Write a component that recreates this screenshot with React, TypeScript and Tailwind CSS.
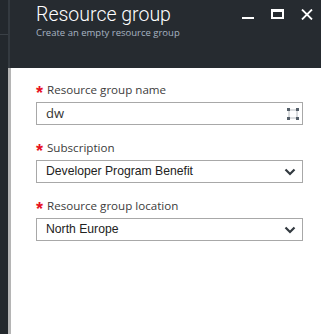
import React from 'react';

const Chevron = () => (
  <svg width="12" height="8" viewBox="0 0 12 8" className="mr-[6px]">
    <path d="M1.5 1.5 L6 6 L10.5 1.5" stroke="#333a40" strokeWidth="2.2" fill="none" />
  </svg>
);

const ExpandIcon = () => (
  <svg width="14" height="14" viewBox="0 0 14 14">
    <rect x="3" y="3" width="8" height="8" fill="none" stroke="#b8bcc0" strokeWidth="1" />
    <rect x="1" y="1" width="3" height="3" fill="#56606a" />
    <rect x="10" y="1" width="3" height="3" fill="#56606a" />
    <rect x="1" y="10" width="3" height="3" fill="#56606a" />
    <rect x="10" y="10" width="3" height="3" fill="#56606a" />
  </svg>
);

const Label = ({ text }: { text: string }) => (
  <div className="flex items-center h-[16px] mb-[4px]">
    <span className="text-[#e81123] text-[18px] leading-none w-[11px] mt-[5px] font-bold" style={{ fontFamily: '"Liberation Sans", sans-serif' }}>*</span>
    <span className="text-[11.6px] text-[#3c3c3c]" style={{ fontFamily: '"Open Sans", sans-serif' }}>{text}</span>
  </div>
);

const Select = ({ value }: { value: string }) => (
  <div className="h-[23px] border border-[#a8a8a8] flex items-center justify-between pl-[9px] bg-white">
    <span className="text-[12.2px] text-[#222]" style={{ fontFamily: '"Liberation Sans", Arial, sans-serif' }}>{value}</span>
    <Chevron />
  </div>
);

export default function App() {
  return (
    <div className="w-[321px] h-[334px] flex bg-white overflow-hidden" style={{ fontFamily: '"Open Sans", sans-serif' }}>
      <div className="w-[8px] h-full bg-[#23282d] flex flex-col">
        <div className="h-[34px]" />
        <div className="h-px bg-[#3a4046]" />
      </div>
      <div className="flex-1 flex flex-col">
        <div className="h-[68px] bg-[#262b30] border-l-2 border-[#343a40] flex justify-between pl-[26px]">
          <div className="pt-[1px]">
            <div className="text-[19.5px] leading-[28px] text-white font-light" style={{ fontFamily: 'Roboto, sans-serif' }}>Resource group</div>
            <div className="text-[9.5px] leading-[12px] text-[#a6b4c2] mt-[-2px]">Create an empty resource group</div>
          </div>
          <div className="flex items-start pt-[9px] pr-[8px] gap-[17px]">
            <div className="w-[12px] h-[10px] flex items-end"><div className="w-[12px] h-[2px] bg-white" /></div>
            <div className="w-[13px] h-[10px] border-2 border-white border-t-[3px]" />
            <svg width="12" height="11" viewBox="0 0 12 11">
              <path d="M1 0.5 L11 10.5 M11 0.5 L1 10.5" stroke="#ffffff" strokeWidth="1.8" />
            </svg>
          </div>
        </div>
        <div className="flex-1 border-l-[3px] border-[#b5b5b5] pl-[25px] pr-[18px] pt-[14px]">
          <Label text="Resource group name" />
          <div className="h-[23px] border border-[#a8a8a8] flex items-center justify-between pl-[9px] pr-[2px]">
            <span className="text-[13px] text-[#333]">dw</span>
            <ExpandIcon />
          </div>
          <div className="mt-[15px]">
            <Label text="Subscription" />
            <Select value="Developer Program Benefit" />
          </div>
          <div className="mt-[15px]">
            <Label text="Resource group location" />
            <Select value="North Europe" />
          </div>
        </div>
      </div>
    </div>
  );
}
